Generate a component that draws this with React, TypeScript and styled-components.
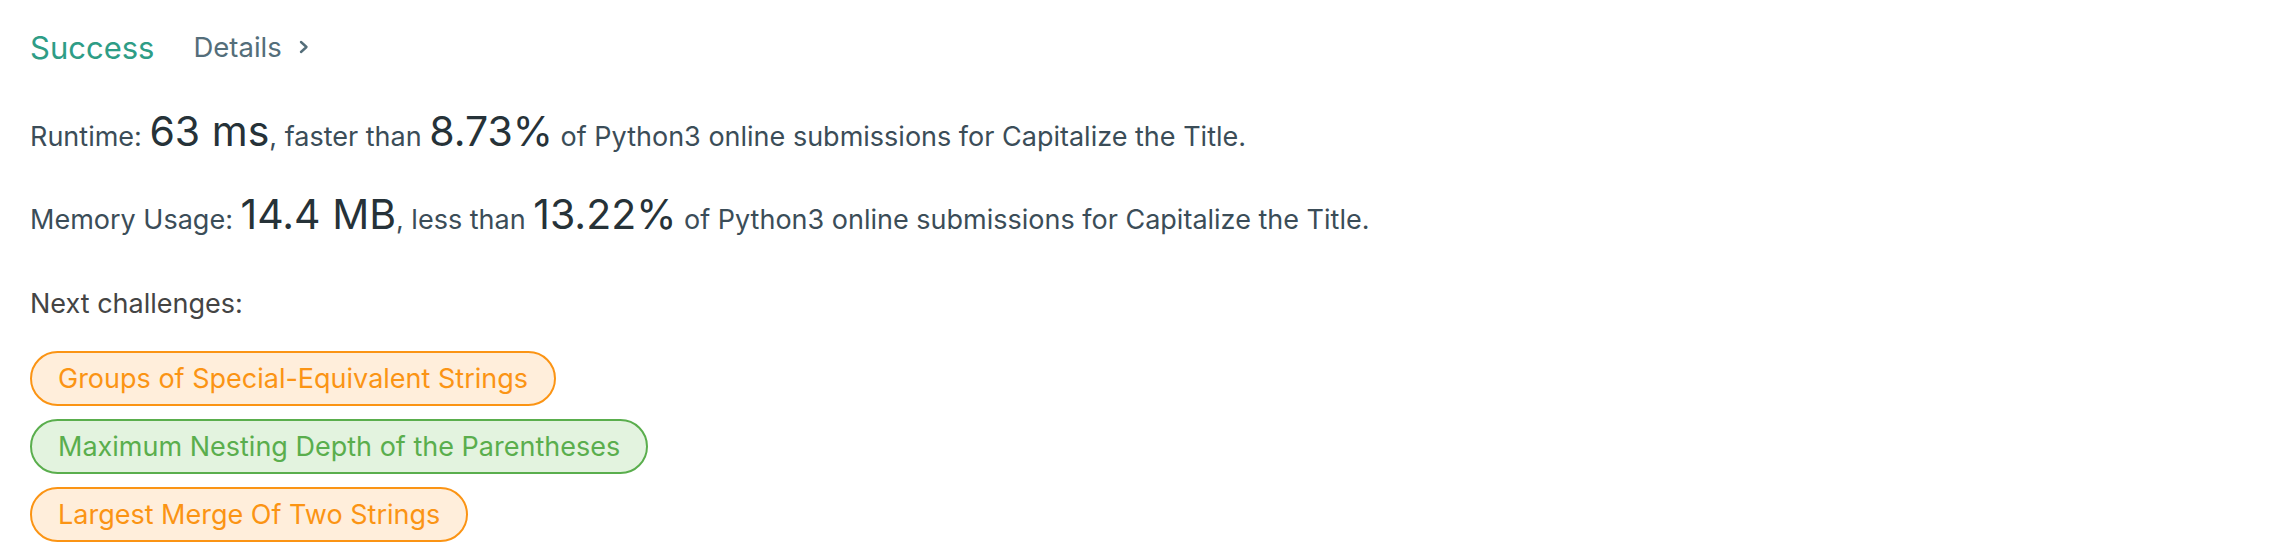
import React from 'react';
import styled, { createGlobalStyle } from 'styled-components';

const GlobalStyle = createGlobalStyle`
  body {
    margin: 0;
    background: #fff;
    font-family: Inter, "Noto Sans", sans-serif;
  }
`;

const Page = styled.div`
  padding: 22px 30px 0 30px;
`;

const Header = styled.div`
  display: flex;
  align-items: center;
  gap: 39px;
  height: 50px;
`;

const Status = styled.span`
  font-size: 31px;
  color: #2e9d86;
`;

const DetailsLink = styled.a`
  display: flex;
  align-items: center;
  gap: 17px;
  font-size: 27.5px;
  color: #546e7a;
  cursor: pointer;
`;

const Stat = styled.p`
  margin: 0;
  font-size: 27px;
  color: #3b4d58;
  line-height: 50px;
  height: 50px;
`;

const Big = styled.span`
  font-size: 41px;
  line-height: 1;
  color: #263238;
`;

const StatsBlock = styled.div`
  display: flex;
  flex-direction: column;
  gap: 33px;
  margin-top: 39px;
`;

const NextTitle = styled.p`
  margin: 35px 0 0 0;
  font-size: 27px;
  color: #444;
  line-height: 50px;
`;

const PillList = styled.div`
  display: flex;
  flex-direction: column;
  align-items: flex-start;
  gap: 13px;
  margin-top: 22px;
`;

const Pill = styled.a<{ $tone: 'orange' | 'green' }>`
  display: inline-flex;
  align-items: center;
  height: 55px;
  box-sizing: border-box;
  padding: 0 26px;
  border-radius: 28px;
  border: 2px solid ${p => (p.$tone === 'green' ? '#5aae4d' : '#fb9414')};
  background: ${p => (p.$tone === 'green' ? '#e3f3df' : '#ffeedb')};
  color: ${p => (p.$tone === 'green' ? '#5aae4d' : '#fb9414')};
  font-size: 27px;
  cursor: pointer;
`;

const Chevron = () => (
  <svg width="10" height="14" viewBox="0 0 10 14" fill="none">
    <path d="M2 2 L7.5 7 L2 12" stroke="#546e7a" strokeWidth="2.4" strokeLinecap="round" strokeLinejoin="round" />
  </svg>
);

const challenges: { title: string; tone: 'orange' | 'green' }[] = [
  { title: 'Groups of Special-Equivalent Strings', tone: 'orange' },
  { title: 'Maximum Nesting Depth of the Parentheses', tone: 'green' },
  { title: 'Largest Merge Of Two Strings', tone: 'orange' },
];

export default function App() {
  return (
    <>
      <GlobalStyle />
      <Page>
        <Header>
          <Status>Success</Status>
          <DetailsLink>
            Details <Chevron />
          </DetailsLink>
        </Header>
        <StatsBlock>
          <Stat>
            Runtime: <Big>63 ms</Big>, faster than <Big>8.73%</Big> of Python3 online submissions for Capitalize the Title.
          </Stat>
          <Stat>
            Memory Usage: <Big>14.4 MB</Big>, less than <Big>13.22%</Big> of Python3 online submissions for Capitalize the Title.
          </Stat>
        </StatsBlock>
        <NextTitle>Next challenges:</NextTitle>
        <PillList>
          {challenges.map(c => (
            <Pill key={c.title} $tone={c.tone}>{c.title}</Pill>
          ))}
        </PillList>
      </Page>
    </>
  );
}
